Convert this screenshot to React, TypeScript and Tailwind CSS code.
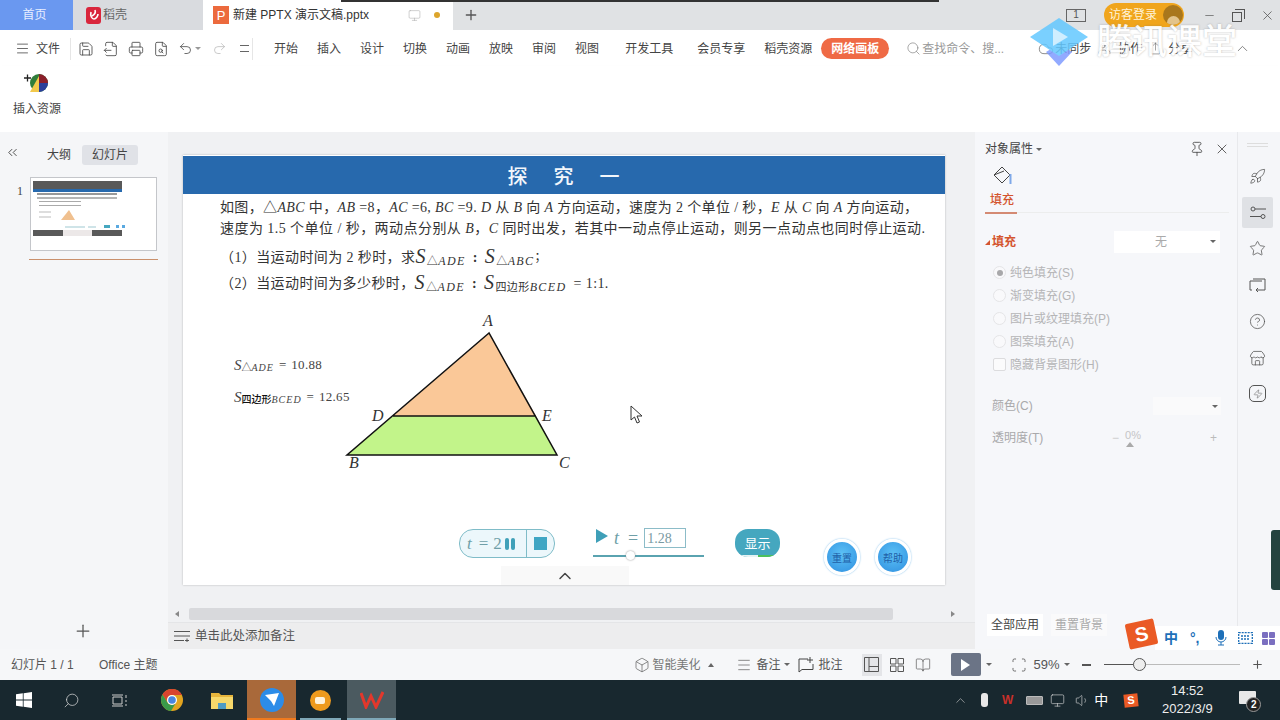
import {
  BookOpen,
  Box,
  ChevronUp,
  ChevronsLeft,
  CircleHelp,
  Cloud,
  FileOutput,
  FileSearch,
  Menu,
  Minus,
  Monitor,
  Pin,
  Plus,
  Printer,
  Redo2,
  Rocket,
  Save,
  Scan,
  Search,
  Share,
  Star,
  Store,
  Undo2,
  Users,
  Volume1,
  X,
  Zap,
} from 'lucide-react';

const menus = ['开始', '插入', '设计', '切换', '动画', '放映', '审阅', '视图'];
const menus2 = ['开发工具', '会员专享', '稻壳资源'];
const fills = ['纯色填充(S)', '渐变填充(G)', '图片或纹理填充(P)', '图案填充(A)'];

const Caret = ({ className = '' }: { className?: string }) => (
  <span className={`inline-block h-0 w-0 border-x-[3px] border-t-[3px] border-x-transparent border-t-[#666] ${className}`} />
);

const TitleBar = () => (
  <div className="flex h-[30px] shrink-0 items-stretch bg-[#e0e2e4] text-[12px]">
    <div className="flex w-[73px] items-center justify-center bg-[#6a98f0] pr-[4px] text-[#e8eeff]">首页</div>
    <div className="flex w-[130px] items-center gap-[2px] bg-[#d9dbdf] pl-[13px] text-[#666]">
      <span className="flex h-[17px] w-[15px] items-center justify-center rounded-[3px] bg-[#d9263c]">
        <svg width="10" height="12" viewBox="0 0 10 12"><path d="M6 1 C7 4 5 6 3 7 M2 3 C1 7 3 10 5 10 C7 10 9 7 9 5" fill="none" stroke="#fff" strokeWidth="1.6" /></svg>
      </span>
      稻壳
    </div>
    <div className="flex w-[250px] items-center bg-white pl-[10px] text-[#333]">
      <span className="mr-[4px] flex h-[18px] w-[16px] items-center justify-center bg-[#ec6a3d] text-[13px] leading-none text-white">P</span>
      <span className="w-[175px] text-[12px]">新建 PPTX 演示文稿.pptx</span>
      <Monitor size={13} strokeWidth={1} className="text-[#aaa]" />
      <span className="ml-[13px] h-[6px] w-[6px] rounded-full bg-[#dca52c]" />
    </div>
    <div className="ml-[10px] flex items-center">
      <Plus size={16} strokeWidth={2} className="text-[#555]" />
    </div>
    <div className="ml-auto flex items-center pr-[5px]">
      <span className="mr-[18px] flex h-[13px] w-[20px] items-center justify-center border border-[#666] text-[10px] leading-none text-[#555]">1</span>
      <div className="relative flex h-[24px] w-[80px] items-center rounded-full bg-[#f0a51c] pl-[5px] text-[12px] text-[#fff3d6]">
        访客登录
        <span className="absolute right-[1px] top-[2px] flex h-[20px] w-[20px] items-end justify-center overflow-hidden rounded-full bg-[#a9771c]">
          <span className="h-[9px] w-[13px] rounded-t-full bg-[#e3c48b]" />
        </span>
      </div>
      <Minus size={13} strokeWidth={1.25} className="ml-[19px] text-[#555]" />
      <span className="relative ml-[16px] block h-[13px] w-[13px]">
        <span className="absolute bottom-0 left-0 h-[10px] w-[10px] border border-[#555] bg-[#e0e2e4]" />
        <span className="absolute right-0 top-0 h-[10px] w-[10px] border-r border-t border-[#555]" />
      </span>
      <X size={15} strokeWidth={1.25} className="ml-[15px] text-[#555]" />
    </div>
  </div>
);

const Toolbar = () => (
  <div className="flex h-[36px] shrink-0 items-center bg-white pt-[1px] text-[12px] text-[#444]">
    <Menu size={15} strokeWidth={1.25} className="ml-[15px] text-[#444]" />
    <span className="ml-[6px] w-[25px]">文件</span>
    <span className="ml-[9px] h-[22px] w-px bg-[#e6e6e6]" />
    <div className="ml-[7px] flex items-center gap-[9px] text-[#444]">
      <Save size={16} strokeWidth={1.25} />
      <FileOutput size={16} strokeWidth={1.25} />
      <Printer size={16} strokeWidth={1.25} />
      <FileSearch size={16} strokeWidth={1.25} />
    </div>
    <Undo2 size={15} strokeWidth={1.25} className="ml-[9px] text-[#444]" />
    <Caret className="ml-[2px] border-t-[#999]" />
    <Redo2 size={15} strokeWidth={1.25} className="ml-[11px] text-[#bbb]" />
    <span className="ml-[13px] h-[7px] w-[9px] border-b border-t border-[#666]" />
    <span className="ml-[3px] h-[22px] w-px bg-[#e6e6e6]" />
    <div className="ml-[21px] flex items-center gap-[19px]">
      {menus.map((m) => (
        <span key={m}>{m}</span>
      ))}
    </div>
    <div className="ml-[26px] flex items-center gap-[24px]">
      <span>{menus2[0]}</span>
      <span>{menus2[1]}</span>
    </div>
    <span className="ml-[19px]">{menus2[2]}</span>
    <span className="ml-[9px] flex h-[21px] w-[68px] items-center justify-center rounded-full bg-[#ef6a45] font-bold text-white">网络画板</span>
    <Search size={15} strokeWidth={1} className="ml-[17px] text-[#777]" />
    <span className="ml-[1px] text-[#999]">查找命令、搜...</span>
    <Cloud size={16} strokeWidth={1} className="ml-[34px] text-[#555]" />
    <span className="ml-[1px]">未同步</span>
    <Users size={13} strokeWidth={1} className="ml-[7px] text-[#555]" />
    <span className="ml-[7px]">协作</span>
    <Share size={13} strokeWidth={1} className="ml-[7px] text-[#555]" />
    <span className="ml-[6px]">分享</span>
    <ChevronUp size={17} strokeWidth={1} className="ml-[42px] text-[#555]" />
  </div>
);

const Ribbon = () => (
  <div className="flex h-[66px] shrink-0 flex-col items-start bg-white pl-[13px] shadow-[0_2px_3px_rgba(0,0,0,0.08)]">
    <svg width="26" height="20" viewBox="0 0 26 20" className="ml-[11px] mt-[7px]">
      <circle cx="15" cy="10" r="9" fill="#2f7d3a" />
      <path d="M15 1 A9 9 0 0 1 24 10 L15 10 Z" fill="#8b1f2a" />
      <path d="M24 10 A9 9 0 0 1 15 19 L15 10 Z" fill="#2a3f9a" />
      <path d="M6 19 L15 3 L15 19 Z" fill="#f2c94c" />
      <path d="M0 5 H7 M3.5 1.5 V8.5" stroke="#222" strokeWidth="1.3" />
    </svg>
    <span className="mt-[7px] text-[12px] leading-[18px] text-[#444]">插入资源</span>
  </div>
);

const Thumbnail = () => (
  <div className="ml-[30px] mt-[11px] flex h-[74px] w-[127px] flex-col items-start border border-[#c4c6ca] bg-white pl-[2px] pt-[3px]">
    <div className="h-[8px] w-[89px] bg-[#595959]" />
    <div className="h-[3px] w-[89px] bg-[#2769ad]" />
    <div className="ml-[4px] mt-[1px] h-[2px] w-[80px] bg-[#999]" />
    <div className="ml-[4px] mt-[2px] h-[2px] w-[80px] bg-[#b5b5b5]" />
    <div className="ml-[6px] mt-[2px] h-[1px] w-[42px] bg-[#aaa]" />
    <div className="ml-[6px] mt-[3px] h-[1px] w-[42px] bg-[#aaa]" />
    <svg width="89" height="13" viewBox="0 0 89 13" className="mt-[2px]">
      <path d="M28 12 L36 2 L42 12 Z" fill="#f0c08f" />
      <path d="M6 4 H18 M6 9 H18" stroke="#bbb" />
    </svg>
    <div className="ml-[32px] mt-[4px] flex items-center gap-[3px]">
      <span className="h-[2px] w-[20px] bg-[#cfe4e8]" />
      <span className="h-[2px] w-[8px] bg-[#cfe4e8]" />
      <span className="ml-[5px] h-[3px] w-[6px] bg-[#45a7bf]" />
      <span className="ml-[3px] h-[3px] w-[3px] bg-[#5aa9e0]" />
      <span className="h-[3px] w-[3px] bg-[#5aa9e0]" />
    </div>
    <div className="mt-[2px] flex h-[6px] w-[89px]">
      <span className="w-[30px] bg-[#595959]" />
      <span className="w-[29px] bg-[#ece8e8]" />
      <span className="w-[30px] bg-[#595959]" />
    </div>
  </div>
);

const LeftPanel = () => (
  <div className="flex w-[168px] shrink-0 flex-col bg-[#f5f6f8] text-[12px] text-[#444]">
    <div className="flex h-[34px] items-end pb-[1px]">
      <ChevronsLeft size={15} strokeWidth={1.5} className="mb-[5px] ml-[5px] text-[#444]" />
      <span className="ml-[18px] flex h-[20px] items-center px-[9px]">大纲</span>
      <span className="ml-[2px] flex h-[20px] w-[56px] items-center justify-center rounded-[3px] bg-[#e0e2e7]">幻灯片</span>
    </div>
    <div className="relative">
      <span className="absolute left-[17px] top-[16px] font-['Liberation_Serif',serif] text-[12px]">1</span>
      <Thumbnail />
    </div>
    <div className="ml-[29px] mt-[8px] h-px w-[129px] bg-[#c9906c]" />
    <div className="mt-auto flex h-[28px] justify-center pr-[2px]">
      <Plus size={20} strokeWidth={1.5} className="text-[#555]" />
    </div>
  </div>
);

const Sub = ({ big, sub, serifSub }: { big: string; sub: string; serifSub?: string }) => (
  <span className="whitespace-nowrap">
    <i className="font-['Liberation_Serif',serif] text-[20px] leading-none">{big}</i>
    <sub className="ml-[1px] text-[11px] not-italic">
      {serifSub}
      <i className="font-['Liberation_Serif',serif] text-[12px] tracking-[1.4px]">{sub}</i>
    </sub>
  </span>
);

const Diagram = () => (
  <div className="flex h-[165px] items-start pl-[51px]">
    <div className="w-[106px] pt-[45px] font-['Liberation_Serif','Noto_Sans_CJK_SC',serif] text-[#444]">
      <div className="flex h-[20px] items-center whitespace-nowrap text-[13px]">
        <i className="text-[15px]">S</i>
        <sub className="text-[10px]">△<i className="tracking-[1px]">ADE</i></sub>
        <span className="ml-[5px]">=</span>
        <span className="ml-[5px] tracking-[0.3px]">10.88</span>
      </div>
      <div className="mt-[12px] flex h-[20px] items-center whitespace-nowrap text-[13px]">
        <i className="text-[15px]">S</i>
        <sub className="text-[10px] font-medium text-[#111]">四边形<i className="font-normal tracking-[1px] text-[#444]">BCED</i></sub>
        <span className="ml-[5px]">=</span>
        <span className="ml-[5px] tracking-[0.3px]">12.65</span>
      </div>
    </div>
    <svg width="240" height="165" viewBox="340 310 240 165" className="font-['Liberation_Serif',serif] text-[16px] italic">
      <path d="M489 333 L393 416 H536 Z" fill="#fac898" />
      <path d="M393 416 H536 L557 455 H347 Z" fill="#c2f48a" />
      <path d="M489 333 L347 455 H557 Z M393 416 H536" fill="none" stroke="#111" strokeWidth="1.5" />
      <text x="483" y="326" fill="#333">A</text>
      <text x="372" y="421" fill="#333">D</text>
      <text x="542" y="421" fill="#333">E</text>
      <text x="349" y="468" fill="#333">B</text>
      <text x="559" y="468" fill="#333">C</text>
    </svg>
  </div>
);

const Controls = () => (
  <div className="mt-[53px] flex items-start pl-[276px] font-['Liberation_Serif','Noto_Sans_CJK_SC',serif]">
    <div className="mt-[1px] flex h-[29px] w-[96px] items-center rounded-[14px] border border-[#7fbcc8] bg-[#ecf7fb]">
      <div className="flex h-full w-[67px] shrink-0 items-center whitespace-nowrap border-r border-[#7fbcc8] pl-[7px] text-[17px] text-[#6f9fa8]">
        <i>t</i>
        <span className="ml-[7px]">=</span>
        <span className="ml-[5px]">2</span>
        <span className="ml-[3px] h-[12px] w-[4px] shrink-0 rounded-[2px] bg-[#3fa0b8]" />
        <span className="ml-[2px] h-[12px] w-[4px] shrink-0 rounded-[2px] bg-[#3fa0b8]" />
      </div>
      <span className="ml-[7px] h-[13px] w-[13px] bg-[#3fa6c4]" />
    </div>
    <div className="ml-[38px] w-[111px]">
      <div className="flex h-[20px] items-center pl-[3px] text-[18px] text-[#6f9fa8]">
        <span className="mb-[4px] h-0 w-0 border-y-[7px] border-l-[12px] border-y-transparent border-l-[#3f9fb8]" />
        <i className="ml-[6px]">t</i>
        <span className="ml-[9px]">=</span>
        <span className="ml-[6px] flex h-[20px] w-[42px] items-center border border-[#8cbcc8] pl-[2px] text-[14px] text-[#7a9aa2]">1.28</span>
      </div>
      <div className="relative mt-[7px] h-[2px] bg-[#5aa3b0]">
        <span className="absolute left-[33px] top-[-4px] h-[9px] w-[9px] rounded-full bg-white shadow-[0_0_2px_#888]" />
      </div>
    </div>
    <div className="relative ml-[31px] mt-[1px] flex h-[28px] w-[45px] items-center justify-center overflow-hidden rounded-[13px] bg-[#45a7bf] font-['Noto_Sans_CJK_SC',sans-serif] text-[13px] text-white">
      显示
      <span className="absolute bottom-0 left-[7px] h-[2px] w-[16px] bg-[#e6f3f3]" />
      <span className="absolute bottom-0 left-[23px] h-[2px] w-[16px] bg-[#4cc05c]" />
    </div>
    <div className="ml-[44px] mt-[11px] flex gap-[15px] font-['Noto_Sans_CJK_SC',sans-serif] text-[10px] text-[#1f5fa8]">
      <span className="flex h-[36px] w-[36px] items-center justify-center rounded-full border-[3px] border-white bg-[radial-gradient(circle_at_50%_40%,#5cc1f5,#2f8fe0)] shadow-[0_0_2px_#6fb5e8]">重置</span>
      <span className="flex h-[36px] w-[36px] items-center justify-center rounded-full border-[3px] border-white bg-[radial-gradient(circle_at_50%_40%,#5cc1f5,#2f8fe0)] shadow-[0_0_2px_#6fb5e8]">帮助</span>
    </div>
  </div>
);

const Slide = () => (
  <div className="relative ml-[15px] mt-[23px] h-[430px] w-[762px] bg-white pt-px shadow-[0_0_2px_rgba(0,0,0,0.25)]">
    <div className="flex h-[38px] items-center justify-center gap-[26px] bg-[#2769ad] pt-[3px] pr-[1px] text-[20px] font-medium text-[#f2f6fb]">
      <span>探</span>
      <span>究</span>
      <span>一</span>
    </div>
    <div className="ml-[37px] mt-[3px] whitespace-nowrap font-['Liberation_Serif','Noto_Sans_CJK_SC',serif] text-[14px] leading-[21px] text-[#333]">
      <div className="tracking-[0.36px]">
        如图，△<i>ABC</i> 中，<i>AB</i> =8，<i>AC</i> =6, <i>BC</i> =9. <i>D</i> 从 <i>B</i> 向 <i>A</i> 方向运动，速度为 2 个单位 / 秒，<i>E</i> 从 <i>C</i> 向 <i>A</i> 方向运动，
      </div>
      <div className="tracking-[0.45px]">
        速度为 1.5 个单位 / 秒，两动点分别从 <i>B</i>，<i>C</i> 同时出发，若其中一动点停止运动，则另一点动点也同时停止运动.
      </div>
    </div>
    <div className="ml-[37px] mt-[5px] whitespace-nowrap font-['Liberation_Serif','Noto_Sans_CJK_SC',serif] text-[14px] tracking-[0.4px] text-[#333]">
      <div className="flex h-[26px] items-center">
        （1）当运动时间为 2 秒时，求
        <Sub big="S" sub="ADE" serifSub="△" />
        <span className="mx-[7px] font-bold">:</span>
        <Sub big="S" sub="ABC" serifSub="△" />
        <span className="text-[12px]">；</span>
      </div>
      <div className="flex h-[26px] items-center">
        （2）当运动时间为多少秒时，
        <Sub big="S" sub="ADE" serifSub="△" />
        <span className="mx-[7px] font-bold">:</span>
        <Sub big="S" sub="BCED" serifSub="四边形" />
        <span className="ml-[7px]">= 1:1.</span>
      </div>
    </div>
    <div className="mt-[14px]">
      <Diagram />
    </div>
    <Controls />
    {/* mouse pointer and the collapse handle lie over the slide */}
    <svg width="13" height="19" viewBox="0 0 13 19" className="absolute left-[447px] top-[250px]">
      <path d="M1 1 L1 15 L4.5 12 L7 18 L9.5 17 L7 11 L12 11 Z" fill="#fff" stroke="#333" strokeWidth="1" />
    </svg>
    <div className="absolute bottom-0 left-[318px] flex h-[19px] w-[128px] items-center justify-center bg-[#f9f9f9]">
      <ChevronUp size={20} strokeWidth={1.75} className="text-[#444]" />
    </div>
  </div>
);

const Center = () => (
  <div className="flex w-[807px] shrink-0 flex-col bg-[#f0f1f3]">
    <Slide />
    <div className="mt-[22px] flex h-[14px] items-center">
      <span className="ml-[7px] h-0 w-0 border-y-[3px] border-r-[4px] border-y-transparent border-r-[#888]" />
      <span className="ml-[10px] h-[12px] w-[704px] rounded-[2px] bg-[#d8d9dc]" />
      <span className="ml-[58px] h-0 w-0 border-y-[3px] border-l-[4px] border-y-transparent border-l-[#888]" />
    </div>
    <div className="mt-[1px] flex flex-1 items-center border-t border-[#e4e5e7] bg-[#ededee] pl-[6px] text-[12.5px] text-[#555]">
      <svg width="16" height="12" viewBox="0 0 16 12" fill="none" stroke="#555">
        <path d="M0 1.5 H16 M0 6 H16 M0 10.5 H10 M13 8.5 V12 M11 10.5 H15" />
      </svg>
      <span className="ml-[5px]">单击此处添加备注</span>
    </div>
  </div>
);

const RightPanel = () => (
  <div className="flex w-[263px] shrink-0 flex-col border-r border-[#e8e9ec] bg-[#f6f7fa] pl-[10px] text-[12px]">
    <div className="flex h-[34px] items-center pr-[7px] text-[#444]">
      <span>对象属性</span>
      <Caret className="ml-[3px]" />
      <Pin size={16} strokeWidth={1.25} className="ml-auto text-[#444]" />
      <X size={16} strokeWidth={1.25} className="ml-[9px] text-[#444]" />
    </div>
    <svg width="20" height="20" viewBox="0 0 20 20" fill="none" className="ml-[7px]" stroke="#444">
      <path d="M10 1 L18 9 L10 17 L2 9 Z M2 9 L12 5" />
      <path d="M18.5 8 V18" stroke="#7fa8e8" strokeWidth="2" />
    </svg>
    <div className="ml-[5px] mt-[5px] text-[12px] font-medium text-[#d4552f]">填充</div>
    <div className="mt-[3px] flex h-px pr-[8px]">
      <span className="h-[2px] w-[32px] bg-[#d48a73]" />
      <span className="h-px flex-1 bg-[#eceded]" />
    </div>
    <div className="mt-[18px] flex h-[22px] items-center">
      <span className="h-0 w-0 border-b-[5px] border-l-[5px] border-b-[#d4552f] border-l-transparent" />
      <span className="ml-[2px] font-bold text-[#d4552f]">填充</span>
      <div className="relative ml-[98px] flex h-[22px] w-[106px] items-center justify-center bg-white pr-[12px] text-[#aaa]">
        无
        <Caret className="absolute right-[4px] top-[9px]" />
      </div>
    </div>
    <div className="mt-[8px] text-[#b5b5b7]">
      {fills.map((f, i) => (
        <div key={f} className="flex h-[23px] items-center">
          <span className="ml-[8px] flex h-[13px] w-[13px] items-center justify-center rounded-full border border-[#e5e5e7] bg-[#f9f9fb]">
            {i === 0 && <span className="h-[6px] w-[6px] rounded-full bg-[#a8a8aa]" />}
          </span>
          <span className="ml-[4px]">{f}</span>
        </div>
      ))}
      <div className="flex h-[23px] items-center">
        <span className="ml-[8px] h-[13px] w-[13px] rounded-[2px] border border-[#dcdcde] bg-[#fbfbfc]" />
        <span className="ml-[4px]">隐藏背景图形(H)</span>
      </div>
    </div>
    <div className="mt-[20px] flex h-[20px] items-center pl-[7px] text-[#a9a9ab]">
      <span>颜色(C)</span>
      <div className="relative ml-[120px] h-[18px] w-[68px] bg-[#fafafb]">
        <Caret className="absolute right-[3px] top-[8px]" />
      </div>
    </div>
    <div className="mt-[12px] flex h-[20px] items-center pl-[7px] text-[#a9a9ab]">
      <span className="w-[120px]">透明度(T)</span>
      <span className="text-[#ccc]">−</span>
      <span className="relative ml-[6px] mt-[-6px] text-[11px] text-[#c5c5c7]">
        0%
        <span className="absolute left-[1px] top-[15px] h-0 w-0 border-x-[4px] border-b-[5px] border-x-transparent border-b-[#aaa]" />
      </span>
      <span className="ml-[69px] text-[#bbb]">+</span>
    </div>
    <div className="mt-auto flex gap-[8px] pb-[13px] pl-[2px]">
      <span className="flex h-[22px] w-[56px] items-center justify-center bg-white text-[#444]">全部应用</span>
      <span className="flex h-[22px] w-[56px] items-center justify-center bg-[#fafafb] text-[#aaa]">重置背景</span>
    </div>
  </div>
);

const SideStrip = () => (
  <div className="flex w-[42px] shrink-0 flex-col items-center bg-[#f5f6f9] pr-[3px] text-[#555]">
    <div className="mt-[11px] h-[4px] w-[21px] border-y border-[#ddd]" />
    <Rocket size={17} strokeWidth={1.1} className="mt-[21px]" />
    <div className="mt-[12px] flex h-[31px] w-[31px] items-center justify-center rounded-[2px] bg-[#dfe1e5]">
      <svg width="16" height="14" viewBox="0 0 16 14" fill="none" stroke="#555">
        <circle cx="3" cy="3" r="2" />
        <path d="M5 3 H16 M0 10.5 H11" />
        <circle cx="13" cy="10.5" r="2" />
      </svg>
    </div>
    <Star size={17} strokeWidth={1.1} className="mt-[12px]" />
    <svg width="17" height="16" viewBox="0 0 17 16" fill="none" stroke="#555" className="mt-[21px]">
      <path d="M3 12 H1 V3 H13 M4 1 H16 V12 H7 M9 10 L7 12 L9 14" />
    </svg>
    <CircleHelp size={17} strokeWidth={1.1} className="mt-[19px]" />
    <Store size={17} strokeWidth={1.1} className="mt-[20px]" />
    <span className="mt-[18px] flex h-[17px] w-[17px] items-center justify-center rounded-[5px] border border-[#555]">
      <Zap size={10} strokeWidth={1.2} />
    </span>
  </div>
);

const StatusBar = () => (
  <div className="flex h-[31px] shrink-0 items-center bg-[#f6f7f9] text-[12px] text-[#555]">
    <span className="ml-[11px] w-[88px]">幻灯片 1 / 1</span>
    <span>Office 主题</span>
    <Box size={16} strokeWidth={1} className="ml-[477px]" />
    <span className="ml-[2px] text-[#777]">智能美化</span>
    <span className="ml-[8px] h-0 w-0 border-x-[3px] border-b-[4px] border-x-transparent border-b-[#666]" />
    <Menu size={16} strokeWidth={1} className="ml-[22px]" />
    <span className="ml-[4px]">备注</span>
    <Caret className="ml-[3px]" />
    <svg width="16" height="16" viewBox="0 0 16 16" fill="none" stroke="#444" className="ml-[8px]">
      <path d="M10 2 H1 V15 L4 12.5 H15 V7 M12 0 V6 M9 3 H15" />
    </svg>
    <span className="ml-[5px]">批注</span>
    <span className="ml-[19px] flex h-[22px] w-[20px] items-center justify-center bg-[#e4e5e8]">
      <svg width="15" height="15" viewBox="0 0 15 15" fill="none" stroke="#555"><path d="M.5.5 H14.5 V14.5 H.5 Z M5 .5 V14.5 M5 9.5 H14.5" /></svg>
    </span>
    <svg width="14" height="14" viewBox="0 0 14 14" fill="none" stroke="#555" className="ml-[8px]">
      <path d="M.5.5 H6 V6 H.5 Z M8 .5 H13.5 V6 H8 Z M.5 8 H6 V13.5 H.5 Z M8 8 H13.5 V13.5 H8 Z" />
    </svg>
    <BookOpen size={16} strokeWidth={1} className="ml-[11px]" />
    <span className="ml-[20px] flex h-[23px] w-[30px] items-center justify-center rounded-[2px] bg-[#6b7486]">
      <span className="h-0 w-0 border-y-[6px] border-l-[9px] border-y-transparent border-l-white" />
    </span>
    <Caret className="ml-[5px]" />
    <Scan size={16} strokeWidth={1.25} className="ml-[19px]" />
    <span className="ml-[7px] text-[13px]">59%</span>
    <Caret className="ml-[4px]" />
    <span className="ml-[12px] h-[2px] w-[9px] bg-[#555]" />
    <div className="relative ml-[13px] h-px w-[136px] bg-[#bbb]">
      <span className="absolute left-0 top-0 h-px w-[30px] bg-[#555]" />
      <span className="absolute left-[29px] top-[-6px] h-[13px] w-[13px] rounded-full border border-[#555] bg-[#eee]" />
    </div>
    <Plus size={13} strokeWidth={2} className="ml-[11px]" />
  </div>
);

const TaskTile = ({ className, line, children }: { className: string; line: string; children: React.ReactNode }) => (
  <div className={`relative flex h-full w-[49px] items-center justify-center ${className}`}>
    {children}
    <span className={`absolute bottom-0 h-[2px] ${line}`} />
  </div>
);

const Taskbar = () => (
  <div className="flex h-[40px] shrink-0 items-center bg-[#18282f] text-white">
    <svg width="16" height="16" viewBox="0 0 16 16" className="ml-[16px]" fill="#fff">
      <path d="M0 2.3 L6.8 1.3 V7.6 H0 Z M7.6 1.2 L16 0 V7.6 H7.6 Z M0 8.4 H6.8 V14.7 L0 13.7 Z M7.6 8.4 H16 V16 L7.6 14.8 Z" />
    </svg>
    <Search size={17} strokeWidth={1} className="ml-[31px] -scale-x-100 text-[#ddd]" />
    <svg width="17" height="15" viewBox="0 0 17 15" fill="none" stroke="#ccc" className="ml-[31px]">
      <path d="M1 2 H12 M1 13 H12 M2 4 H11 V11 H2 Z M15 2 V5 M15 7 V9 M15 11 V13" />
    </svg>
    <div className="ml-[19px] flex h-full w-[49px] items-center justify-center">
      <svg width="22" height="22" viewBox="0 0 22 22">
        <circle cx="11" cy="11" r="11" fill="#e2a41f" />
        <path d="M11 0 A11 11 0 0 0 1.5 5.5 L6.5 13.5 A5 5 0 0 1 11 6 H21 A11 11 0 0 0 11 0 Z" fill="#d9442f" />
        <path d="M1.5 5.5 A11 11 0 0 0 10 22 L14.8 14 A5 5 0 0 1 6.5 13.5 Z" fill="#3a9a4a" />
        <circle cx="11" cy="11" r="5" fill="#fff" />
        <circle cx="11" cy="11" r="3.8" fill="#4a86e0" />
      </svg>
    </div>
    <div className="flex h-full w-[51px] items-center justify-center">
      <svg width="22" height="18" viewBox="0 0 22 18">
        <path d="M0 2 H8 L10 4 H22 V18 H0 Z" fill="#e6b53c" />
        <path d="M0 6 H22 V18 H0 Z" fill="#f6d86b" />
        <path d="M7 12 H15 V18 H7 Z" fill="#4f9bc4" />
      </svg>
    </div>
    <TaskTile className="bg-[#a9693a]" line="w-full bg-[#f07a1e]">
      <span className="flex h-[24px] w-[24px] items-center justify-center rounded-full bg-[#2c8ce8]">
        <svg width="14" height="14" viewBox="0 0 14 14"><path d="M0 2 L14 0 L9 13 L6 8 Z" fill="#fff" /></svg>
      </span>
    </TaskTile>
    <div className="relative ml-[2px] flex h-full w-[44px] items-center justify-center">
      <span className="flex h-[21px] w-[21px] items-center justify-center rounded-full bg-[#ee9a1d]">
        <span className="h-[7px] w-[10px] rounded-[2px] bg-[#fff3dc]" />
      </span>
      <span className="absolute bottom-0 h-[2px] w-[41px] bg-[#7fa8b8]" />
    </div>
    <TaskTile className="ml-[5px] bg-[#4b5a60]" line="w-full bg-[#7fa8b8]">
      <svg width="24" height="18" viewBox="0 0 24 18" fill="none" stroke="#e2382c" strokeWidth="3">
        <path d="M1 2 L6 16 L11 5 L16 16 L23 1" />
      </svg>
    </TaskTile>
    <ChevronUp size={15} strokeWidth={1} className="ml-[557px] text-[#ccc]" />
    <span className="ml-[13px] h-[14px] w-[7px] rounded-[3px] bg-[#e8e8e8]" />
    <span className="ml-[14px] text-[12px] font-bold leading-none text-[#c8302a]">W</span>
    <span className="ml-[13px] h-[9px] w-[17px] rounded-[1px] border border-[#bbb] bg-[#999]" />
    <Monitor size={15} strokeWidth={1} className="ml-[7px] text-[#ddd]" />
    <Volume1 size={15} strokeWidth={1} className="ml-[10px] text-[#ddd]" />
    <span className="ml-[4px] text-[14px]">中</span>
    <span className="ml-[16px] flex h-[13px] w-[14px] -rotate-6 items-center justify-center bg-[#ea5a25] text-[11px] font-bold leading-none">S</span>
    <div className="ml-[14px] flex w-[70px] flex-col items-center text-[13px] leading-[18px] text-[#eee]">
      <span>14:52</span>
      <span>2022/3/9</span>
    </div>
    <div className="relative ml-[17px] h-[18px] w-[18px]">
      <span className="absolute left-0 top-0 h-[13px] w-[17px] rounded-[1px] bg-[#e8e8e8]" />
      <span className="absolute left-[7px] top-[6px] flex h-[15px] w-[15px] items-center justify-center rounded-full border border-[#999] bg-[#222] text-[10px] font-bold leading-none">2</span>
    </div>
  </div>
);

const Watermark = () => (
  <>
    <svg width="58" height="48" viewBox="0 0 58 48" className="absolute left-[1030px] top-[18px] opacity-85">
      <path d="M16 34 L29 48 L42 34 L29 26 Z" fill="#7f9cff" />
      <path d="M29 0 L58 19 L29 38 L0 19 Z" fill="#63c8ff" />
      <path d="M23 10 L38 19 L23 28 Z" fill="#c8ecff" />
    </svg>
    <span className="absolute left-[1097px] top-[19px] text-[35px] font-medium leading-[46px] text-white opacity-90 [text-shadow:0_0_2px_rgba(120,120,120,0.6)]">
      腾讯课堂
    </span>
  </>
);

const ImeBar = () => (
  <div className="absolute left-[1155px] top-[626px] flex h-[24px] w-[125px] items-center bg-white pl-[9px] text-[#1d6fb8]">
    <span className="absolute left-[-28px] top-[-5px] flex h-[26px] w-[29px] -rotate-12 items-center justify-center rounded-[2px] bg-[#ea5a25] text-[20px] font-bold leading-none text-white">S</span>
    <span className="text-[14px] font-bold leading-none">中</span>
    <span className="ml-[12px] text-[14px] font-bold leading-none">°,</span>
    <svg width="12" height="16" viewBox="0 0 12 16" className="ml-[15px]">
      <rect x="3" y="0" width="6" height="10" rx="3" fill="#1d6fb8" />
      <path d="M1 7 A5 5 0 0 0 11 7 M6 12 V15 M3 15 H9" fill="none" stroke="#1d6fb8" />
    </svg>
    <svg width="15" height="12" viewBox="0 0 15 12" className="ml-[11px]" fill="none" stroke="#1d6fb8" strokeWidth="1.3">
      <path d="M.7.7 H14.3 V11.3 H.7 Z M3 4 H12 M3 7 H12" strokeDasharray="2 1" />
    </svg>
    <div className="ml-[9px] grid grid-cols-2 gap-px">
      <span className="h-[6px] w-[6px] rounded-[1px] bg-[#7b6fc0]" />
      <span className="h-[6px] w-[6px] rounded-[1px] bg-[#7b6fc0]" />
      <span className="h-[6px] w-[6px] rounded-[1px] bg-[#7b6fc0]" />
      <span className="h-[6px] w-[6px] rounded-[1px] bg-[#7b6fc0]" />
    </div>
  </div>
);

export default function App() {
  return (
    <div className="relative flex h-[720px] w-[1280px] flex-col overflow-hidden bg-white font-['Liberation_Sans','Noto_Sans_CJK_SC',sans-serif]">
      <TitleBar />
      <Toolbar />
      <Ribbon />
      <div className="flex h-[517px] shrink-0">
        <LeftPanel />
        <Center />
        <RightPanel />
        <SideStrip />
      </div>
      <StatusBar />
      <Taskbar />
      {/* video overlays: top strip, watermark, input method bar, edge widget */}
      <div className="absolute left-[341px] top-0 h-[2px] w-[598px] bg-[#333]" />
      <Watermark />
      <ImeBar />
      <div className="absolute left-[1271px] top-[530px] h-[60px] w-[9px] rounded-l-[3px] bg-[#24433f]" />
    </div>
  );
}
